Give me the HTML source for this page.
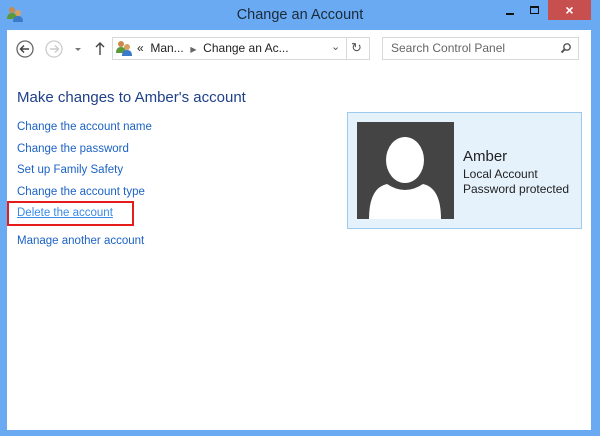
<!DOCTYPE html>
<html><head><meta charset="utf-8"><style>
*{margin:0;padding:0;box-sizing:border-box}
body{width:600px;height:436px;background:#6aaaf2;position:relative;overflow:hidden;font-family:"Liberation Sans",sans-serif}
.abs{position:absolute}
.content{left:7px;top:30px;width:584px;height:400px;background:#fff}
.link{position:absolute;left:17px;font-size:11.5px;color:#1c62c4;white-space:nowrap}
.txt{font-size:12px;color:#222;white-space:nowrap}
</style></head><body>
<svg class="abs" style="left:6px;top:5px" width="18" height="18" viewBox="0 0 18 18">
<circle cx="6" cy="5" r="3" fill="#c98a4a"/><path d="M1 14 Q1 8 6 8 Q11 8 11 14Z" fill="#5a9a3a"/>
<circle cx="12" cy="8" r="3" fill="#d9a060"/><path d="M7 17 Q7 11 12 11 Q17 11 17 17Z" fill="#3a7ac8"/></svg>
<div class="abs" style="left:0;width:600px;top:7px;text-align:center;font-size:14.5px;color:#1a2a3a">Change an Account</div>
<div class="abs" style="left:506px;top:13px;width:8px;height:2px;background:#111"></div>
<div class="abs" style="left:530px;top:6px;width:9px;height:8px;border:1.5px solid #111;border-top-width:2.5px"></div>
<div class="abs" style="left:548px;top:0;width:43px;height:20px;background:#c7504f;color:#fff;text-align:center;font-size:14px;line-height:20px;font-weight:bold">×</div>
<div class="abs content"></div>
<svg class="abs" style="left:14px;top:38px" width="100" height="22" viewBox="0 0 100 22">
<circle cx="11" cy="11" r="8" fill="none" stroke="#666" stroke-width="1.3"/>
<path d="M15 11H7M10 7.5L6.5 11L10 14.5" fill="none" stroke="#444" stroke-width="1.5"/>
<circle cx="40" cy="11" r="8" fill="none" stroke="#ccc" stroke-width="1.3"/>
<path d="M36 11H44M41 7.5L44.5 11L41 14.5" fill="none" stroke="#ccc" stroke-width="1.5"/>
<path d="M61 10L64 13L67 10Z" fill="#777"/>
<path d="M86 17V5M82 9L86 5L90 9" fill="none" stroke="#444" stroke-width="1.4"/></svg>
<div class="abs" style="left:112px;top:37px;width:258px;height:23px;border:1px solid #d9d9d9"></div>
<div class="abs" style="left:346px;top:37px;width:1px;height:23px;background:#d9d9d9"></div>
<svg class="abs" style="left:115px;top:39px" width="18" height="18" viewBox="0 0 18 18">
<circle cx="6" cy="5" r="3" fill="#c98a4a"/><path d="M1 14 Q1 8 6 8 Q11 8 11 14Z" fill="#5a9a3a"/>
<circle cx="12" cy="8" r="3" fill="#d9a060"/><path d="M7 17 Q7 11 12 11 Q17 11 17 17Z" fill="#3a7ac8"/></svg>
<div class="abs txt" style="left:137px;top:41px;font-size:12px">« &nbsp;Man... &nbsp;<span style="font-size:8px;color:#666">▶</span>&nbsp; Change an Ac...</div>
<div class="abs" style="left:331px;top:40px;font-size:11px;color:#555">⌄</div>
<div class="abs" style="left:351px;top:40px;font-size:13px;color:#555">↻</div>
<div class="abs" style="left:382px;top:37px;width:197px;height:23px;border:1px solid #d9d9d9"></div>
<div class="abs" style="left:391px;top:41px;font-size:12px;color:#666">Search Control Panel</div>
<svg class="abs" style="left:560px;top:42px" width="12" height="12" viewBox="0 0 12 12"><circle cx="7" cy="5" r="3.2" fill="none" stroke="#555" stroke-width="1.4"/><path d="M5 7L1.5 10.5" stroke="#555" stroke-width="2"/></svg>
<div class="abs" style="left:17px;top:89px;font-size:15px;color:#1e3f8a;white-space:nowrap">Make changes to Amber's account</div>
<div class="link" style="top:121px">Change the account name</div>
<div class="link" style="top:143px">Change the password</div>
<div class="link" style="top:164px">Set up Family Safety</div>
<div class="link" style="top:186px">Change the account type</div>
<div class="link" style="top:207px;text-decoration:underline;color:#3a8ae6">Delete the account</div>
<div class="abs" style="left:7px;top:201px;width:127px;height:25px;border:2px solid #e41c1c"></div>
<div class="link" style="top:235px">Manage another account</div>
<div class="abs" style="left:347px;top:112px;width:235px;height:117px;background:#e5f2fc;border:1px solid #9ccbee"></div>
<svg class="abs" style="left:357px;top:122px" width="97" height="97" viewBox="0 0 97 97">
<rect width="97" height="97" fill="#444"/>
<ellipse cx="48" cy="38" rx="19" ry="23" fill="#fff"/>
<path d="M12 97 Q12 66 30 62 Q48 74 66 62 Q84 66 84 97Z" fill="#fff"/></svg>
<div class="abs txt" style="left:463px;top:148px;font-size:15px">Amber</div>
<div class="abs txt" style="left:463px;top:167px">Local Account</div>
<div class="abs txt" style="left:463px;top:182px">Password protected</div>
</body></html>
